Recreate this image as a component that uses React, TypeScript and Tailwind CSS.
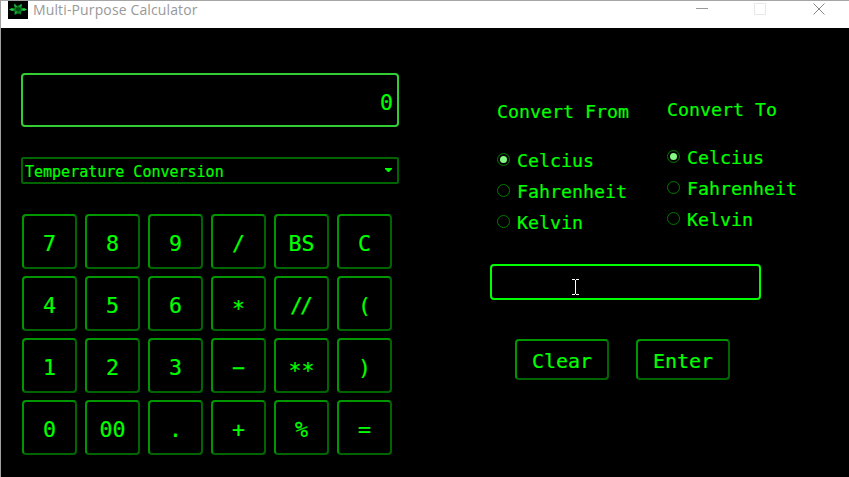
import { useState } from "react";

const KEYS = [
  "7", "8", "9", "/", "BS", "C",
  "4", "5", "6", "*", "//", "(",
  "1", "2", "3", "−", "**", ")",
  "0", "00", ".", "+", "%", "=",
];

// Optical adjustments for glyphs that sit off the digits' centre line.
const KEY_LABEL_STYLES: Record<string, string> = {
  "*": "pt-[5px]",
  "**": "pt-[5px]",
  "//": "tracking-[-3px] pr-[3px]",
};

const UNITS = ["Celcius", "Fahrenheit", "Kelvin"];

const BEVEL =
  "border-2 rounded-[4px] border-t-[#009600] border-l-[#009600] border-r-[#006400] border-b-[#006400]";

function TitleBar() {
  return (
    <header className="flex h-[28px] items-start border-t border-[#a5a5a5] bg-white pl-[7px]">
      <svg width="20" height="18" viewBox="0 0 20 18" className="shrink-0">
        <rect width="20" height="18" fill="#000" />
        <path d="M6 2.500L9 5l5-2-.5 3.500 5.500 2-5.500 1.700-.5 3.300-3-1-3.500 1.500.2-3.500L1 8.500l5.500-1.500z" fill="#0b7d22" />
        <path d="M1 8.500l3-1.500 2.500 1.500L4 10zM19 8.500L16 7l-2.500 1.500L16 10z" fill="#1fc93e" />
        <path d="M6.500 3.500l2 2.500M13.500 3.500l-2 2.500M7 12.500l1.500-2" stroke="#1cb03a" strokeWidth="1.300" />
        <path d="M8.500 6.500h3.500l1 2.500-3 1.500-2.500-1.500z" fill="#044a12" />
      </svg>
      <h1 className="ml-[5px] whitespace-nowrap font-['Open_Sans',sans-serif] text-[14px] leading-[18px] tracking-[0.13px] text-[#999]">
        Multi-Purpose Calculator
      </h1>
      <svg width="130" height="18" viewBox="0 0 130 18" fill="none" shapeRendering="crispEdges" className="mr-[23px] ml-auto">
        <path d="M0 7.500h12" stroke="#999" />
        <path d="M58.500 2.500h11v11h-11z" stroke="#e8e8e8" />
        <path d="M117.500 2.500l11 11M128.500 2.500l-11 11" stroke="#888" shapeRendering="auto" />
      </svg>
    </header>
  );
}

function Calculator() {
  return (
    <section className="w-[378px] shrink-0">
      <div className="flex h-[54px] items-center justify-end rounded-[4px] border-2 border-[#32cd32] pt-[6px] pr-[4px] text-[21.6px]">
        0
      </div>
      <button className="mt-[30px] flex h-[27px] w-full items-center justify-between rounded-[2px] border-2 border-[#006400] pr-[5px] pl-[2px] text-[15px] leading-none">
        <span className="origin-bottom scale-y-110 pt-[4px]">Temperature Conversion</span>
        <svg width="7" height="4" viewBox="0 0 7 4" className="-mt-[2px]">
          <path d="M0 0h7v1L4 4H3L0 1z" fill="#0f0" />
        </svg>
      </button>
      <div className="mt-[30px] ml-px grid w-[370px] grid-cols-6 gap-x-[8px] gap-y-[7px]">
        {KEYS.map((key) => (
          <button
            key={key}
            className={`${BEVEL} flex h-[55px] w-[55px] items-center justify-center pt-[5px] text-[21.6px] leading-none`}
          >
            <span className={KEY_LABEL_STYLES[key]}>{key}</span>
          </button>
        ))}
      </div>
    </section>
  );
}

function UnitGroup({ title, className }: { title: string; className: string }) {
  const [selected, setSelected] = useState(UNITS[0]);
  return (
    <div className={`text-[18.3px] ${className}`}>
      <h2 className="leading-[24px] whitespace-nowrap">{title}</h2>
      {UNITS.map((unit) => (
        <button
          key={unit}
          onClick={() => setSelected(unit)}
          className="flex h-[31px] items-center"
        >
          <span className="mr-[7px] flex size-[13px] items-center justify-center rounded-full border border-[#007800]">
            {selected === unit && <span className="size-[7px] rounded-full bg-[#84f884]" />}
          </span>
          <span className="pt-[4px] leading-none">{unit}</span>
        </button>
      ))}
    </div>
  );
}

function Converter() {
  return (
    <section className="ml-[91px] w-[320px] shrink-0">
      <div className="flex pl-[7px]">
        <UnitGroup title="Convert From" className="w-[170px] pt-[27px] [&>h2]:mb-[20px]" />
        <UnitGroup title="Convert To" className="pt-[25px] [&>h2]:mb-[19px]" />
      </div>
      <div className="mt-[27px] h-[36px] w-[271px] rounded-[4px] border-2 border-[#0f0] pt-[13px] pl-[80px]">
        <svg width="7" height="16" viewBox="0 0 7 16" fill="none" shapeRendering="crispEdges">
          <path d="M0 .5h3M4 .5h3M3.500 1v14M0 15.500h3M4 15.500h3" stroke="#fff" />
        </svg>
      </div>
      <div className="mt-[39px] ml-[25px] flex gap-[27px]">
        {["Clear", "Enter"].map((label) => (
          <button
            key={label}
            className={`${BEVEL} flex h-[41px] w-[94px] items-center justify-center pt-[3px] text-[20px] leading-none`}
          >
            {label}
          </button>
        ))}
      </div>
    </section>
  );
}

export default function App() {
  return (
    <div className="flex h-[477px] w-[849px] flex-col overflow-hidden border-l border-[#a0a0a0] bg-black font-['DejaVu_Sans_Mono',monospace] text-[#0f0]">
      <TitleBar />
      <main className="flex pt-[45px] pl-[20px] [-webkit-text-stroke:0.2px_#0f0]">
        <Calculator />
        <Converter />
      </main>
    </div>
  );
}
